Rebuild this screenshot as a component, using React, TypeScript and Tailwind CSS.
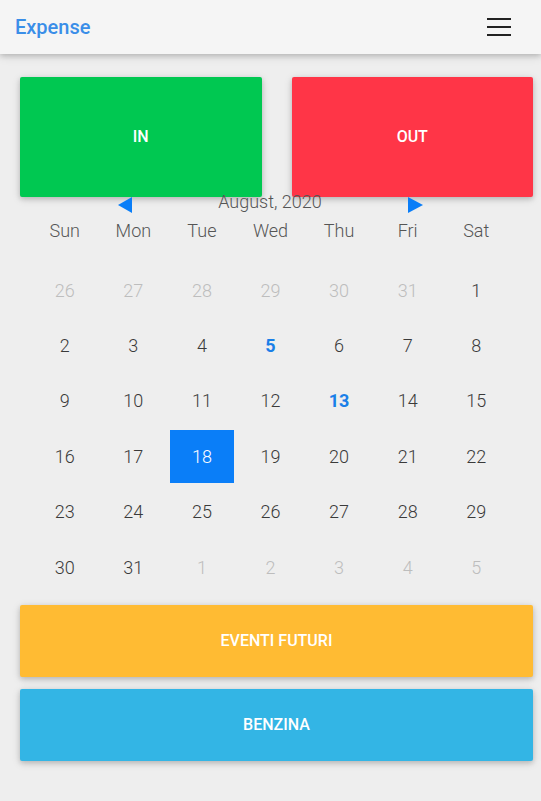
import React from "react";

const weekDays = ["Sun", "Mon", "Tue", "Wed", "Thu", "Fri", "Sat"];

type Day = { n: number; muted?: boolean; mark?: boolean; selected?: boolean };

const weeks: Day[][] = [
  [
    { n: 26, muted: true },
    { n: 27, muted: true },
    { n: 28, muted: true },
    { n: 29, muted: true },
    { n: 30, muted: true },
    { n: 31, muted: true },
    { n: 1 },
  ],
  [{ n: 2 }, { n: 3 }, { n: 4 }, { n: 5, mark: true }, { n: 6 }, { n: 7 }, { n: 8 }],
  [{ n: 9 }, { n: 10 }, { n: 11 }, { n: 12 }, { n: 13, mark: true }, { n: 14 }, { n: 15 }],
  [{ n: 16 }, { n: 17 }, { n: 18, selected: true }, { n: 19 }, { n: 20 }, { n: 21 }, { n: 22 }],
  [{ n: 23 }, { n: 24 }, { n: 25 }, { n: 26 }, { n: 27 }, { n: 28 }, { n: 29 }],
  [
    { n: 30 },
    { n: 31 },
    { n: 1, muted: true },
    { n: 2, muted: true },
    { n: 3, muted: true },
    { n: 4, muted: true },
    { n: 5, muted: true },
  ],
];

const btnShadow = "shadow-[0_2px_5px_0_rgba(0,0,0,0.16),0_2px_10px_0_rgba(0,0,0,0.12)]";

function DayCell({ day }: { day: Day }) {
  if (day.selected) {
    return (
      <div className="h-[55.4px] flex items-center justify-center">
        <div className="w-[64px] h-[53px] bg-[#0a7ef8] text-white flex items-center justify-center font-light">
          {day.n}
        </div>
      </div>
    );
  }
  let color = "text-[#3a3a3a] font-light";
  if (day.muted) color = "text-[#bdbdbd] font-light";
  if (day.mark) color = "text-[#1a7fe8] font-bold";
  return <div className={`h-[55.4px] flex items-center justify-center ${color}`}>{day.n}</div>;
}

export default function App() {
  return (
    <div className="h-screen overflow-hidden bg-[#eeeeee] font-['Roboto',sans-serif]">
      <nav className="relative z-20 h-[54px] bg-[#f5f5f5] shadow-[0_2px_5px_0_rgba(0,0,0,0.16),0_2px_10px_0_rgba(0,0,0,0.12)] flex items-center justify-between pl-[15px] pr-[30px]">
        <a href="#" className="text-[20px] font-medium text-[#3a8ee8] leading-none">
          Expense
        </a>
        <button className="flex flex-col gap-[6px] w-[24px]">
          <span className="block h-[2px] bg-[#222]" />
          <span className="block h-[2px] bg-[#222]" />
          <span className="block h-[2px] bg-[#222]" />
        </button>
      </nav>

      <div className="pl-5 pr-2 pt-[23px]">
        <div className="grid grid-cols-2 gap-[30px]">
          <button className={`h-[120px] rounded-[2px] bg-[#00c851] text-white text-[16px] font-medium ${btnShadow}`}>
            IN
          </button>
          <button className={`h-[120px] rounded-[2px] bg-[#ff3547] text-white text-[16px] font-medium ${btnShadow}`}>
            OUT
          </button>
        </div>
      </div>

      <div className="relative z-10 w-[480px] mx-auto -mt-[7px]">
        <div className="flex items-center justify-center h-[24px]">
          <span className="block mt-[6px] w-0 h-0 border-y-[8px] border-y-transparent border-r-[14px] border-r-[#0a7ef8]" />
          <span className="mx-[86px] text-[18px] leading-[24px] font-light text-[#555]">August, 2020</span>
          <span className="block mt-[6px] w-0 h-0 border-y-[8px] border-y-transparent border-l-[15px] border-l-[#0a7ef8]" />
        </div>
        <div className="grid grid-cols-7 mt-[5px] text-[18px] leading-[24px] font-light text-[#555]">
          {weekDays.map((d) => (
            <div key={d} className="text-center">
              {d}
            </div>
          ))}
        </div>
        <div className="mt-[20px] text-[18px] leading-[24px]">
          {weeks.map((w, i) => (
            <div key={i} className="grid grid-cols-7">
              {w.map((d, j) => (
                <DayCell key={j} day={d} />
              ))}
            </div>
          ))}
        </div>
      </div>

      <div className="pl-5 pr-2 mt-[10px] flex flex-col gap-[12px]">
        <button className={`h-[72px] rounded-[2px] bg-[#ffbb33] text-white text-[16px] font-medium ${btnShadow}`}>
          EVENTI FUTURI
        </button>
        <button className={`h-[72px] rounded-[2px] bg-[#33b5e5] text-white text-[16px] font-medium ${btnShadow}`}>
          BENZINA
        </button>
      </div>
    </div>
  );
}
